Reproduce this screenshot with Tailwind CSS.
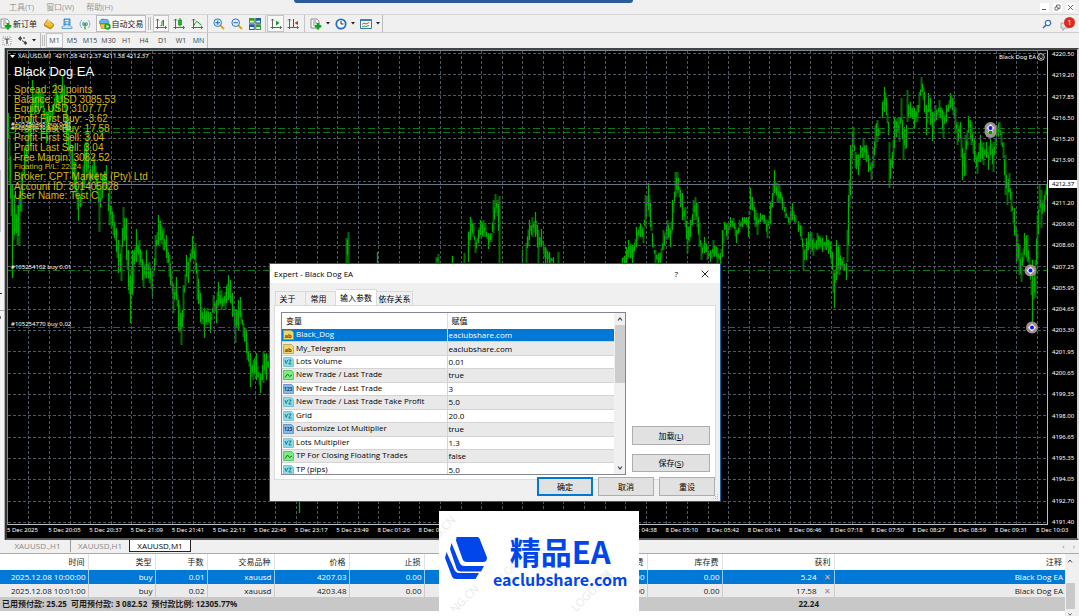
<!DOCTYPE html>
<html lang="zh-CN">
<head>
<meta charset="utf-8">
<title>Black Dog EA</title>
<script src="https://cdn.jsdelivr.net/npm/@tailwindcss/browser@4"></script>
</head>
<body class="flex h-screen flex-col overflow-hidden bg-[#f0f0f0] font-['Open_Sans','Noto_Sans_CJK_SC',sans-serif] text-[8px] leading-none text-[#1a1a1a]">

<svg class="hidden" aria-hidden="true">
  <symbol id="doc-plus" viewBox="0 0 12 12"><path d="M1 1h6l2 2v7H1z" fill="#fafafa" stroke="#777" stroke-width=".8"/><path d="M3 3h3M3 5h4M3 7h2" stroke="#666" stroke-width=".7"/><path d="M8 5v6.500M4.800 8.300h6.500" stroke="#0aa818" stroke-width="2.600"/></symbol>
  <symbol id="caret" viewBox="0 0 4 3"><path d="M0 0h4L2 2.500z" fill="#222"/></symbol>
  <symbol id="axes" viewBox="0 0 12 12"><path d="M2.500 1v10M.5 9.500h11M1 2.500 2.500 1 4 2.500M10 8l1.500 1.500L10 11" fill="none" stroke="#555" stroke-width=".9"/></symbol>
  <symbol id="type-string" viewBox="0 0 11 10"><path d="M.5.5h8l2 2v7H.5z" fill="#ead671" stroke="#b3993a" stroke-width=".7"/><text x="1.500" y="7.500" font-size="6" font-weight="700" fill="#5b4908">ab</text></symbol>
  <symbol id="type-double" viewBox="0 0 11 10"><path d="M.5.5h8l2 2v7H.5z" fill="#8ddde8" stroke="#5cb5c2" stroke-width=".7"/><path d="M2 3l1.200 3.500L4.700 3M5.500 3h2.700L5.800 7h2.700" stroke="#147386" fill="none" stroke-width=".9"/></symbol>
  <symbol id="type-bool" viewBox="0 0 11 10"><path d="M.5.5h8l2 2v7H.5z" fill="#7cea85" stroke="#3fb54b" stroke-width=".7"/><path d="M2 7.500 4.500 4l2 2.500L9 5" stroke="#0c7a1c" fill="none"/></symbol>
  <symbol id="type-int" viewBox="0 0 11 10"><path d="M.5.5h8l2 2v7H.5z" fill="#83b9ea" stroke="#4a80bb" stroke-width=".7"/><text x=".9" y="7.200" font-size="5" font-weight="700" fill="#103c78">123</text></symbol>
</svg>

<header class="relative shrink-0">
  <div class="absolute top-0 left-[294px] h-[3px] w-[339px] rounded-b-sm bg-[#2b5a9b]"></div>
  <div class="flex h-[14px] items-center justify-between pr-1 pl-[9px] text-[#999]">
    <nav class="flex gap-3" aria-label="菜单">
      <a href="#">工具(T)</a>
      <a href="#">窗口(W)</a>
      <a href="#">帮助(H)</a>
    </nav>
    <div class="flex gap-1">
      <button class="grid size-[9px] place-items-center bg-white" aria-label="最小化"><svg class="size-[7px]" viewBox="0 0 7 7"><path d="M1 5.500h4" stroke="#555"/></svg></button>
      <button class="grid size-[9px] place-items-center bg-white" aria-label="还原"><svg class="size-[7px]" viewBox="0 0 7 7"><path d="M1 3h3v3H1zM2.500 3V1H6v3.500H4" fill="none" stroke="#555" stroke-width=".8"/></svg></button>
      <button class="grid size-[9px] place-items-center bg-white" aria-label="关闭"><svg class="size-[7px]" viewBox="0 0 7 7"><path d="M1 1l5 5M6 1 1 6" stroke="#555" stroke-width=".9"/></svg></button>
    </div>
  </div>

  <div class="flex h-[18px] items-stretch border-t border-[#d5d5d5]">
    <button class="flex w-[40px] items-center gap-px"><svg class="size-3 shrink-0"><use href="#doc-plus"/></svg><span class="whitespace-nowrap">新订单</span></button>
    <button class="grid w-[18px] place-items-center" aria-label="市场"><svg class="size-3" viewBox="0 0 12 12"><path d="M1 6.500 4.500 1.500 11 6.500 7.500 10.500z" fill="#f2bf35" stroke="#a87510" stroke-width=".7"/><path d="M1 6.500v1.500l6.500 3.500L11 8V6.500l-3.500 3z" fill="#c58a17"/><path d="M4.500 2 7 4" stroke="#fff0b0"/></svg></button>
    <button class="grid w-[18px] place-items-center" aria-label="社区"><svg class="size-3" viewBox="0 0 12 12"><path d="M3 1h6v6H3z" fill="#6fb7f2" stroke="#2276bd" stroke-width=".8"/><path d="M4.500 2.500h3M6 4v3" stroke="#fff"/><path d="M1 10.500c-.5-2 1-3 2.500-2.500 1-2 4-2 5 0 2-.5 3 1 2.500 2.500z" fill="#cfe6fa" stroke="#4a90cf" stroke-width=".8"/></svg></button>
    <button class="grid w-[18px] place-items-center" aria-label="信号"><svg class="size-3" viewBox="0 0 12 12"><path d="M3 10A5 5 0 0 1 3 2M9 2a5 5 0 0 1 0 8" fill="none" stroke="#8aaccb"/><path d="M4.500 8a3 3 0 0 1 0-4M7.500 4a3 3 0 0 1 0 4" fill="none" stroke="#4a86bb"/><circle cx="6" cy="6" r="1.500" fill="#35a63f"/><path d="M6 7v4.500" stroke="#35a63f" stroke-width="1.300"/></svg></button>
    <button class="ml-[2px] flex w-[50px] items-center justify-center gap-px border border-[#bbb] bg-[#f8f8f8]"><svg class="size-3 shrink-0" viewBox="0 0 12 12"><path d="M1 6h8l-1.500 4.500h-5z" fill="#f0c53c" stroke="#aa7e15" stroke-width=".6"/><path d="M.5 5.500C0 2.500 3 0 5.500 1.500 8 .5 11 3 9.500 5.500z" fill="#69b3e4" stroke="#2a77b0" stroke-width=".7"/><circle cx="8.500" cy="8.500" r="3.200" fill="#19a52a"/><path d="M7.500 6.800v3.400l2.700-1.700z" fill="#fff"/></svg><span class="whitespace-nowrap">自动交易</span></button>
    <span class="mx-[2px] my-[2px] w-[3px] border-x border-[#bbb]"></span>
    <button class="grid w-[16px] place-items-center border border-[#c4c4c4] bg-[#f8f8f8]" aria-label="柱状图"><svg class="size-3" viewBox="0 0 12 12"><use href="#axes"/><path d="M5.500 7.500h1.500V3h2M8.500 2v6" stroke="#139a22" fill="none" stroke-width="1"/></svg></button>
    <button class="grid w-[20px] place-items-center" aria-label="蜡烛图"><svg class="size-3" viewBox="0 0 12 12"><use href="#axes"/><path d="M7 0v8.500" stroke="#139a22"/><path d="M5.500 2h3v5h-3z" fill="#1bbb2e" stroke="#0c7a1c" stroke-width=".6"/></svg></button>
    <button class="grid w-[16px] place-items-center" aria-label="折线图"><svg class="size-3" viewBox="0 0 12 12"><use href="#axes"/><path d="M3 7.500C5 2.500 6.500 3 7.500 5l3 2" stroke="#139a22" fill="none"/></svg></button>
    <span class="mx-[2px] w-px bg-[#c4c4c4]"></span>
    <button class="grid w-[18px] place-items-center" aria-label="放大"><svg class="size-3" viewBox="0 0 12 12"><path d="M7 7l4 4" stroke="#d6a522" stroke-width="2"/><circle cx="4.700" cy="4.700" r="3.800" fill="#d5ecfc" stroke="#3279bd"/><path d="M2.500 4.700h4.400M4.700 2.500v4.400" stroke="#236aa8"/></svg></button>
    <button class="grid w-[18px] place-items-center" aria-label="缩小"><svg class="size-3" viewBox="0 0 12 12"><path d="M7 7l4 4" stroke="#d6a522" stroke-width="2"/><circle cx="4.700" cy="4.700" r="3.800" fill="#d5ecfc" stroke="#3279bd"/><path d="M2.500 4.700h4.400" stroke="#236aa8"/></svg></button>
    <button class="grid w-[18px] place-items-center" aria-label="平铺窗口"><svg class="size-3" viewBox="0 0 12 12"><path d="M0 0h5.700v5.700H0zM6.300 6.300H12V12H6.300z" fill="#3a9a32"/><path d="M6.300 0H12v5.700H6.300zM0 6.300h5.700V12H0z" fill="#2458a8"/><path d="M1 3.700h3.700M7.300 3.700H11M1 10h3.700M7.300 10H11" stroke="#f2f8ff" stroke-width="1.800"/></svg></button>
    <span class="mx-px w-px bg-[#c4c4c4]"></span>
    <button class="grid w-[17px] place-items-center border border-[#c4c4c4] bg-[#f8f8f8]" aria-label="自动滚动"><svg class="size-3" viewBox="0 0 12 12"><use href="#axes"/><path d="M6 2.500v5L9.500 5z" fill="#139a22"/></svg></button>
    <button class="grid w-[18px] place-items-center" aria-label="图表平移"><svg class="size-3" viewBox="0 0 12 12"><use href="#axes"/><path d="M6.500 1v8" stroke="#555"/><path d="M11 3v4L7.500 5z" fill="#c03818"/></svg></button>
    <span class="mx-[2px] w-px bg-[#c4c4c4]"></span>
    <button class="flex w-[25px] items-center justify-center gap-1" aria-label="指标"><svg class="size-3"><use href="#doc-plus"/></svg><svg class="h-[3px] w-1"><use href="#caret"/></svg></button>
    <button class="flex w-[25px] items-center justify-center gap-1" aria-label="周期"><svg class="size-3" viewBox="0 0 12 12"><circle cx="6" cy="6" r="4.700" fill="#f4faff" stroke="#256fc0" stroke-width="1.800"/><path d="M6 3v3h2.500" fill="none" stroke="#333"/></svg><svg class="h-[3px] w-1"><use href="#caret"/></svg></button>
    <button class="flex w-[25px] items-center justify-center gap-1" aria-label="模板"><svg class="size-3" viewBox="0 0 12 12"><path d="M.5 1.500h11v9H.5z" fill="#fff" stroke="#3a76ac"/><path d="M.5 2h11" stroke="#3a80c8" stroke-width="2"/><path d="M2 6.500l2-1.500 2 1 3-1.500" stroke="#b8512a" fill="none"/><path d="M2 9l2-1 2 .5 3-1" stroke="#329a3a" fill="none"/></svg><svg class="h-[3px] w-1"><use href="#caret"/></svg></button>
    <span class="w-px bg-[#bbb]"></span>
    <div class="ml-auto flex items-center gap-2 pr-1">
      <button aria-label="搜索"><svg class="size-[10px]" viewBox="0 0 10 10"><path d="M1 9l3.500-3.500" stroke="#3c6cb8" stroke-width="1.600"/><circle cx="6" cy="4" r="2.700" fill="#fff" stroke="#3c6cb8" stroke-width="1.200"/></svg></button>
      <button class="relative h-[14px] w-[15px]" aria-label="通知"><svg class="absolute bottom-0 left-0 size-[10px]" viewBox="0 0 10 10"><path d="M1 2h8v5H5L3 9.500V7H1z" fill="#e2e2e2" stroke="#999" stroke-width=".8"/></svg><span class="absolute top-0 right-0 grid size-[11px] place-items-center rounded-full bg-[#dc2b20] text-[8px] text-white">1</span></button>
    </div>
  </div>

  <div class="flex h-[16px] items-stretch border-t border-[#cfcfcf] text-[7px] text-[#444]">
    <button class="grid w-[13px] place-items-center" aria-label="文本标签"><svg class="size-[10px]" viewBox="0 0 10 10"><path d="M1 1h8v8H1z" fill="none" stroke="#999" stroke-dasharray="1 1"/><path d="M2.500 3h5M5 3v5" stroke="#444" stroke-width="1.200"/></svg></button>
    <button class="flex w-[27px] items-center justify-end gap-1 pr-1" aria-label="箭头"><svg class="size-[10px]" viewBox="0 0 10 10"><path d="M2.500 0 4 2.500 2.500 5 0 2.500zM7.500 5l1.500 2-1.500 2-2-2z" fill="#444"/><path d="M4 4.500l5 3M5 2h2" stroke="#444"/></svg><svg class="h-[3px] w-1"><use href="#caret"/></svg></button>
    <span class="w-px bg-[#bbb]"></span>
    <span class="mx-[1px] my-[2px] w-[3px] border-x border-[#bbb]"></span>
    <button class="w-[17px] border border-[#c4c4c4] bg-[#f8f8f8]">M1</button>
    <button class="w-[18px]">M5</button>
    <button class="w-[18px]">M15</button>
    <button class="w-[19px]">M30</button>
    <button class="w-[17px]">H1</button>
    <button class="w-[18px]">H4</button>
    <button class="w-[19px]">D1</button>
    <button class="w-[18px]">W1</button>
    <button class="w-[17px]">MN</button>
    <span class="w-px bg-[#bbb]"></span>
  </div>
</header>

<main class="relative flex min-h-0 flex-1">
  <div class="flex w-[5px] shrink-0 flex-col border-r border-[#b0b0b0] bg-[#f4f4f4] pt-[122px]">
    <span class="h-[62px] w-px bg-[#c4c4c4]"></span>
    <span class="mt-[61px] h-px w-[2px] bg-[#333]"></span>
    <span class="mt-[16px] h-px bg-[#b0b0b0]"></span>
    <span class="mt-[5px] h-[3px] w-px bg-[#777]"></span>
  </div>

  <section class="grid min-w-0 flex-1 grid-cols-[1fr_29px] grid-rows-[1fr_13px] border-t-2 border-r-2 border-b-2 border-l-2 border-t-[#444] border-r-[#d4d4d4] border-b-[#5a5a5a] border-l-[#333] bg-black font-['Noto_Sans','Noto_Sans_CJK_SC',sans-serif] text-[6px] text-white" aria-label="XAUUSD,M1">
    <div class="relative min-h-0 min-w-0 border border-[#b8c0c4] border-t-[#7c8a92] border-l-[#7c8a92]">
      <svg id="plot" class="absolute inset-0 size-full" viewBox="8 51 1039 473" preserveAspectRatio="none">
        <path id="dark" stroke="#006c00" stroke-width="2"/>
        <path id="lit" stroke="#00b000" stroke-width="1.300"/>
        <g id="grid" stroke="#4c5863" stroke-width="1" stroke-dasharray="3 2"></g>
        <path d="M8 184.500H1048" stroke="#66747f"/>
        <path d="M8 128.500H1048M8 132.500H1048M8 270.500H1048M8 327.500H1048" stroke="#0c7a14" stroke-dasharray="7 3 2 3"/>
        <g fill="#9c918c"><circle cx="990.500" cy="128" r="6"/><circle cx="990.500" cy="132" r="6"/><circle cx="1030.500" cy="270.500" r="6"/><circle cx="1032" cy="327.500" r="6"/></g>
        <path d="M990.500 124l4 4-4 4-4-4zM990.500 129l3 3-3 3-3-3zM1030.500 266.500l4 4-4 4-4-4zM1032 323.500l4 4-4 4-4-4z" fill="#f4f4f4"/>
        <circle cx="990.500" cy="132.500" r="2" fill="#16871c"/>
        <g fill="#1414f0"><circle cx="990.500" cy="128" r="2"/><circle cx="1030.500" cy="270.500" r="2"/><circle cx="1032" cy="327.500" r="2"/></g>
      </svg>
      <p class="absolute top-[2px] left-[2px] flex items-center gap-[3px] whitespace-pre"><svg class="h-[3px] w-[5px]" viewBox="0 0 5 3"><path d="M0 0h5L2.500 3z" fill="#fff"/></svg>XAUUSD,M1  4211.58 4212.37 4211.58 4212.37</p>
      <p class="absolute top-[2px] right-[2px] flex items-center gap-px">Black Dog EA<svg class="size-2" viewBox="0 0 8 8"><circle cx="4" cy="4" r="3.300" fill="none" stroke="#fff" stroke-width=".8"/><path d="M2.300 3h1M4.700 3h1M2.300 4.700q1.700 1.800 3.400 0" fill="none" stroke="#fff" stroke-width=".8"/></svg></p>
      <p class="absolute top-[70px] left-[3px]">#105250465 buy 0.01</p>
      <p class="absolute top-[74px] left-[3px]">#105250479 buy 0.02</p>
      <p class="absolute top-[213px] left-[3px]">#105254102 buy 0.01</p>
      <p class="absolute top-[270px] left-[3px]">#105254770 buy 0.02</p>
      <div class="absolute top-[14px] left-[6px] font-['Liberation_Sans',sans-serif] whitespace-nowrap">
        <h1 class="text-[13px] leading-[14px]">Black Dog EA</h1>
        <ul class="mt-[6px] grid h-[116px] grid-rows-12 text-[10px] leading-[10px] text-[#d6b80c]">
          <li>Spread: 29 points</li>
          <li>Balance: USD 3085.53</li>
          <li>Equity: USD 3107.77</li>
          <li>Profit First Buy: -3.62</li>
          <li>Profit Last Buy: 17.58</li>
          <li>Profit First Sell: 3.04</li>
          <li>Profit Last Sell: 3.04</li>
          <li>Free Margin: 3082.52</li>
          <li class="text-[8px]">Floating P/L: 22.24</li>
          <li>Broker: CPT Markets (Pty) Ltd</li>
          <li>Account ID: 301405028</li>
          <li>User Name: Test C</li>
        </ul>
      </div>
    </div>
    <div class="relative">
      <ol id="prices" class="-mb-[2px] flex h-full flex-col justify-between pt-px pl-1 leading-[6px]"></ol>
      <span class="absolute top-[130px] right-0 left-[1px] bg-white pl-[3px] leading-[8px] text-black">4212.37</span>
    </div>
    <ol id="times" class="col-span-2 flex pt-px leading-[8px] whitespace-nowrap"></ol>
  </section>
</main>

<footer class="relative shrink-0">
  <nav class="flex h-[14px] items-start border-b border-[#aaa] pl-[5px] text-[#888]" aria-label="图表">
    <button class="h-[12px] w-[66px] border-r border-[#999]">XAUUSD.,H1</button>
    <button class="h-[12px] w-[58px]">XAUUSD,H1</button>
    <button class="h-[12px] w-[62px] border border-t-0 border-[#222] bg-white text-black">XAUUSD,M1</button>
    <span class="mt-[2px] mr-1 ml-auto flex gap-2"><button aria-label="向左">‹</button><button aria-label="向右">›</button></span>
  </nav>
  <div class="flex h-[62px] bg-white">
    <div class="min-w-0 flex-1">
      <table class="w-full table-fixed border-collapse text-right whitespace-nowrap">
        <colgroup><col class="w-[88px]"><col class="w-[67px]"><col class="w-[52px]"><col class="w-[67px]"><col class="w-[75px]"><col class="w-[75px]"><col class="w-[75px]"><col class="w-[74px]"><col class="w-[74px]"><col class="w-[75px]"><col class="w-[112px]"><col></colgroup>
        <thead>
          <tr class="h-[16px] divide-x divide-[#e2e2e2] [&>th]:pr-[3px] [&>th]:font-normal"><th>时间</th><th>类型</th><th>手数</th><th>交易品种</th><th>价格</th><th>止损</th><th>止盈</th><th>价格</th><th>手续费</th><th>库存费</th><th>获利</th><th>注释</th></tr>
        </thead>
        <tbody>
          <tr class="h-[14px] divide-x divide-white/60 bg-[#0078d7] text-white [&>td]:pr-[2px]"><td>2025.12.08 10:00:00</td><td>buy</td><td>0.01</td><td>xauusd</td><td>4207.03</td><td>0.00</td><td>0.00</td><td>4212.37</td><td>0.00</td><td>0.00</td><td>5.24<button class="ml-[6px] w-[9px] text-center text-[#e8b8a0]" aria-label="平仓">✕</button></td><td>Black Dog EA</td></tr>
          <tr class="h-[13px] divide-x divide-[#ccc] bg-[#ebebeb] [&>td]:pr-[2px]"><td>2025.12.08 10:01:00</td><td>buy</td><td>0.02</td><td>xauusd</td><td>4203.48</td><td>0.00</td><td>0.00</td><td>4212.37</td><td>0.00</td><td>0.00</td><td>17.58<button class="ml-[6px] w-[9px] text-center text-[#888]" aria-label="平仓">✕</button></td><td>Black Dog EA</td></tr>
        </tbody>
        <tfoot>
          <tr class="h-[14px] bg-[#c8c8c8] font-bold"><td colspan="10" class="pl-[2px] text-left">已用预付款: 25.25&nbsp; 可用预付款: 3 082.52&nbsp; 预付款比例: 12305.77%</td><td class="pr-[15px]">22.24</td><td></td></tr>
        </tfoot>
      </table>
    </div>
    <div class="flex w-[14px] flex-col items-center bg-[#f0f0f0] pr-1">
      <svg class="mt-[5px] h-1 w-[6px]" viewBox="0 0 6 4"><path d="M1 3.500 3 1l2 2.500" fill="none" stroke="#444"/></svg>
      <span class="mt-[20px] h-[26px] w-[9px] bg-[#c9c9c9]"></span>
      <svg class="mt-1 h-[3px] w-[6px]" viewBox="0 0 6 4"><path d="M1 .5 3 3 5 .5" fill="none" stroke="#444"/></svg>
    </div>
  </div>
</footer>

<section role="dialog" aria-labelledby="dialog-title" class="absolute top-[263px] left-[269px] flex h-[239px] w-[452px] flex-col border border-[#1b62a5] bg-[#f0f0f0] text-black">
  <div class="flex h-[19px] shrink-0 items-center bg-white pr-[11px] pl-1">
    <h2 id="dialog-title">Expert - Black Dog EA</h2>
    <button class="mr-[23px] ml-auto" aria-label="帮助">?</button>
    <button aria-label="关闭"><svg class="size-2" viewBox="0 0 8 8"><path d="M.7.700l6.600 6.600M7.300.700.7 7.300" stroke="#111" stroke-width=".9"/></svg></button>
  </div>
  <div class="flex h-[22px] shrink-0 items-end pl-[5px]" role="tablist">
    <button role="tab" class="h-[14px] w-[31px] border border-b-0 border-[#d9d9d9] pr-[6px]">关于</button>
    <button role="tab" class="h-[14px] w-[30px] border border-b-0 border-l-0 border-[#d9d9d9] pr-1">常用</button>
    <button role="tab" aria-selected="true" class="h-[16px] w-[41px] border border-b-0 border-l-0 border-[#d9d9d9] bg-white">输入参数</button>
    <button role="tab" class="h-[14px] w-[36px] border border-b-0 border-l-0 border-[#d9d9d9]">依存关系</button>
  </div>
  <div class="mx-1 flex h-[175px] shrink-0 gap-[6px] border border-[#dcdcdc] bg-white pt-[6px] pr-[5px] pl-[6px]">
    <div class="flex h-[163px] min-w-0 flex-1 overflow-hidden border border-[#828790]">
      <div class="min-w-0 flex-1 overflow-hidden">
        <table class="h-[164px] w-full table-fixed border-collapse text-left whitespace-nowrap">
          <colgroup><col class="w-[165px]"><col></colgroup>
          <thead><tr class="h-[16px]"><th class="border-r border-[#ddd] pl-1 font-normal">变量</th><th class="pl-1 font-normal">赋值</th></tr></thead>
          <tbody id="params" class="[&_td]:border-r [&_td]:border-b [&_td]:border-[#d4d4d4] [&_td:last-child]:border-r-0 [&_td]:py-0 [&_td]:pl-px [&_tr:nth-child(even)]:bg-[#e9e9e9] [&_tr:first-child]:bg-[#0078d7] [&_tr:first-child]:text-white [&_svg]:mr-[2px] [&_svg]:inline-block [&_svg]:h-[10px] [&_svg]:w-[11px]"></tbody>
        </table>
      </div>
      <div class="flex w-[11px] flex-col items-center bg-[#f0f0f0]">
        <svg class="my-1 h-1 w-[6px]" viewBox="0 0 6 4"><path d="M1 3.500 3 1l2 2.500" fill="none" stroke="#444" stroke-width="1.200"/></svg>
        <span class="h-[58px] w-[10px] bg-[#cdcdcd]"></span>
        <svg class="mt-auto mb-1 h-1 w-[6px]" viewBox="0 0 6 4"><path d="M1 .5 3 3 5 .5" fill="none" stroke="#444" stroke-width="1.200"/></svg>
      </div>
    </div>
    <div class="flex h-[160px] w-[78px] flex-col justify-end gap-[9px]">
      <button class="h-[19px] border border-[#adadad] bg-[#e1e1e1]">加载(<u>L</u>)</button>
      <button class="h-[18px] border border-[#adadad] bg-[#e1e1e1]">保存(<u>S</u>)</button>
    </div>
  </div>
  <div class="relative -mt-[3px] flex justify-end gap-[5px] pr-[5px]">
    <button class="h-[19px] w-[56px] border-2 border-[#0078d7] bg-[#e1e1e1]">确定</button>
    <button class="h-[19px] w-[56px] border border-[#adadad] bg-[#e1e1e1]">取消</button>
    <button class="h-[19px] w-[56px] border border-[#adadad] bg-[#e1e1e1]">重设</button>
  </div>
  <svg class="absolute right-[1px] bottom-[1px] size-[6px]" viewBox="0 0 6 6"><path d="M4 0h1v1H4zM4 2h1v1H4zM4 4h1v1H4zM2 2h1v1H2zM2 4h1v1H2zM0 4h1v1H0z" fill="#b5b5b5"/></svg>
</section>

<aside class="absolute top-[511px] left-[439px] flex h-[100px] w-[200px] items-center gap-[6px] overflow-hidden bg-white pl-[6px] text-[#0046ea]">
  <span class="absolute top-[10px] left-[-8px] -rotate-45 text-[11px] text-[#e9e9e9]">G.CN</span>
  <span class="absolute top-[82px] left-[8px] -rotate-45 text-[11px] text-[#e9e9e9]">NG.CN</span>
  <span class="absolute top-[42px] left-[54px] -rotate-45 text-[11px] text-[#eeeeee]">LOGO神器</span>
  <span class="absolute top-[74px] left-[126px] -rotate-45 text-[11px] text-[#e9e9e9]">LOGO神器</span>
  <svg class="relative mb-[5px] h-[43px] w-[42px] shrink-0" viewBox="0 0 42 43"><path d="M11.500 0h21q1.500 0 2 1.500l7.500 19q0 4.500-4 4.500H22q-3.500 0-4.500-3L11 3.500z" fill="#0046ea"/><path d="M6.500 6l8 19.500q1.500 3.500 5 3.500h19.500l-3 5.500H16q-3.500 0-4.500-3L5 12z" fill="#0046ea"/><path d="M1.500 15 9.500 33q1.500 3 4.500 3h20L30.500 42H11q-3 0-4-2.500L0 21z" fill="#0046ea"/></svg>
  <div class="relative flex flex-col items-center font-['Noto_Sans_CJK_SC',sans-serif] font-bold whitespace-nowrap">
    <span class="text-[31px] leading-[36px]">精品EA</span>
    <span class="text-[16px] leading-[20px]">eaclubshare.com</span>
  </div>
</aside>

<script>
// Parameter rows of the inputs tab: icon type, name, value
const params = [
  ['string', 'Black_Dog', 'eaclubshare.com'], ['string', 'My_Telegram', 'eaclubshare.com'],
  ['double', 'Lots Volume', '0.01'], ['bool', 'New Trade / Last Trade', 'true'],
  ['int', 'New Trade / Last Trade', '3'], ['double', 'New Trade / Last Trade Take Profit', '5.0'],
  ['double', 'Grid', '20.0'], ['int', 'Customize Lot Multiplier', 'true'],
  ['double', 'Lots Multiplier', '1.3'], ['bool', 'TP For Closing Floating Trades', 'false'],
  ['double', 'TP (pips)', '5.0']];
document.getElementById('params').innerHTML = params.map(([t, n, v]) =>
  `<tr><td><svg><use href="#type-${t}"/></svg>${n}</td><td>${v}</td></tr>`).join('');

// Axis labels
const prices = '4220.50 4219.20 4217.85 4216.50 4215.20 4213.90 4212.55 4211.20 4209.90 4208.60 4207.25 4205.95 4204.65 4203.30 4201.95 4200.65 4199.35 4198.00 4196.65 4195.35 4194.05 4192.70 4191.40'.split(' ');
document.getElementById('prices').innerHTML = prices.map(p => `<li>${p}</li>`).join('');
const times = '5 Dec 2025,5 Dec 20:05,5 Dec 20:37,5 Dec 21:09,5 Dec 21:41,5 Dec 22:13,5 Dec 22:45,5 Dec 23:17,5 Dec 23:49,8 Dec 01:26,8 Dec 01:58,8 Dec 02:30,8 Dec 03:02,8 Dec 03:34,8 Dec 04:06,8 Dec 04:38,8 Dec 05:10,8 Dec 05:42,8 Dec 06:14,8 Dec 06:46,8 Dec 07:18,8 Dec 07:50,8 Dec 08:27,8 Dec 08:59,8 Dec 09:31,8 Dec 10:03'.split(',');
document.getElementById('times').innerHTML = times.map(t => `<li class="min-w-0 flex-1 basis-0">${t}</li>`).join('');

// Grid lines
let grid = '';
for (let k = 1; k <= 50; k++) { const x = Math.round(7.8 + 20.58 * k) + 0.5; grid += `<path d="M${x} 51V524"/>`; }
for (let k = 0; k < 23; k++) { const y = Math.round(52.8 + 21.33 * k) + 0.5; grid += `<path d="M8 ${y}H1048"/>`; }
document.getElementById('grid').innerHTML = grid;

// Price range at key moments: x, high, low; each row is one unbroken run
const runs = [
 '8,113,138 9,135,185 12,185,278 14,195,235 17,205,245 19,195,246 21,172,212 24,148,178 27,135,162 30,105,145 32,80,112 35,92,115 38,88,112 41,88,108 43,92,118 46,112,143 49,108,125 52,105,122 55,83,112 58,95,112 62,75,105 64,85,108 66,105,145 69,118,155 72,145,178 75,162,195 78,195,221 81,182,205 84,145,188 87,132,178 90,165,202 93,155,178 97,172,195 99,188,232 102,175,198 106,165,188 109,188,225 113,215,235 116,228,252 118,240,273 121,245,281 123,207,240 126,218,260 128,250,290 130,275,323 132,250,295 136,229,262 139,240,265 143,262,287 146,250,278 149,262,283 152,275,297 155,235,265 158,215,245 163,228,250 166,235,258 169,255,277 173,283,313 176,277,300 178,300,330 181,313,345 183,285,317 186,255,277 188,262,283 192,236,258 195,243,270 197,270,300 200,293,322 204,308,338 207,308,325 210,312,333 213,295,313 216,300,323 218,282,305 221,290,310 225,292,310 228,275,300 230,280,303 232,293,317 235,310,343 238,300,330 240,297,317 243,323,337 246,330,353 250,353,387 253,360,380 256,353,380 260,373,393 263,352,383 266,353,380 269,353,370',
 '299,501,513', '346,238,264 348,232,264', '377,252,264', '436,257,264 438,254,264', '452,256,264', '464,253,264',
 '468,232,262 470,217,240 473,223,237 475,240,253 478,230,243 480,220,235 483,220,237 485,223,237 488,233,249 491,233,242 493,200,233 495,194,213 497,200,216 499,196,264',
 '522,250,264', '526,243,264 529,220,240 532,217,237 535,212,237 538,230,263 541,229,247 545,247,263 549,252,264 553,257,264', '558,252,264',
 '622,258,264 626,247,264 628,240,257 632,245,264 636,227,247 640,223,237 643,227,243 645,195,227 648,183,210 650,203,227 652,233,247 655,250,264 660,253,264 663,230,250 667,220,240 670,230,247 672,200,230 675,172,197 677,172,193 680,190,207 682,193,220 685,207,227 687,227,253 690,220,237 693,200,220 695,197,220 697,203,227 699,223,247 701,243,260 704,237,253 707,247,260 710,250,262 713,240,257 717,248,263 720,253,264 722,230,257 724,222,230 727,223,240 730,217,227 733,218,228 736,230,243 739,220,232 742,217,227 746,217,225 748,217,237 750,188,210 752,197,210 755,210,227 757,213,235 760,213,222 764,215,223 767,220,238 770,203,223 772,193,207 774,170,193 777,183,203 779,185,202 782,197,210 785,207,218 789,217,225 792,203,220 795,215,223',
 '798,221,232 801,226,240 803,243,270 806,238,260 808,232,250 811,232,252 813,238,256 817,233,250 822,238,252 826,235,250 830,242,258 832,252,270 833,270,293 834,273,308 836,240,280 839,247,275 843,257,270 846,263,280 847,230,262 848,195,245 850,145,195 852,132,155 853,127,148 855,152,168 858,155,175 860,145,158 863,138,158 866,145,162 868,155,172 871,162,180 873,148,168 875,125,148 877,120,142 879,130,135',
 '882,102,118 884,87,112 886,98,115 888,122,135 889,142,188 892,152,168 894,118,148 897,118,132 899,118,142 901,98,122 903,128,160 906,125,148 907,90,122 910,102,118 914,108,128 917,105,122 919,92,108 921,77,92 924,92,112 926,105,135 928,93,112 930,98,125 932,112,141 935,105,122 939,100,118 943,112,138 946,105,122 950,93,108 953,98,115 955,107,133 957,122,145 960,122,138 962,148,180 965,135,175 968,116,132 971,122,145 974,138,162 977,155,174 980,135,162 983,142,165 986,142,158 988,155,170 990,135,155 993,142,172 996,125,145 999,122,133 1001,133,145 1003,142,158 1005,155,195 1007,182,205 1009,173,192 1011,192,212 1014,208,235 1016,228,263 1019,245,275 1021,253,282 1024,233,255 1027,235,262 1029,257,272 1032,260,333 1035,260,298 1037,215,260 1039,185,212 1041,190,228 1044,195,212 1046,185,195'];
let lit = '', dark = '', n = 0;
for (const run of runs) {
  const pts = run.split(' ').map(p => p.split(',').map(Number));
  pts.forEach(([x, hi, lo], i) => {
    const bar = (bx, a, b) => { const d = `M${bx + 0.5} ${a.toFixed(1)}V${b.toFixed(1)}`; if (n++ % 2) dark += d; else lit += d; };
    bar(x, hi, lo);
    const next = pts[i + 1];
    if (!next) return;
    for (let bx = x + 1; bx < next[0]; bx++) {
      const t = (bx - x) / (next[0] - x), a = hi + (next[1] - hi) * t, b = lo + (next[2] - lo) * t;
      const trimTop = Math.abs(Math.sin(bx * 12.9)) * 0.4 * (b - a), trimEnd = Math.abs(Math.sin(bx * 7.3)) * 0.4 * (b - a);
      bar(bx, a + trimTop, b - trimEnd);
    }
  });
}
document.getElementById('lit').setAttribute('d', lit);
document.getElementById('dark').setAttribute('d', dark);
</script>
</body>
</html>
